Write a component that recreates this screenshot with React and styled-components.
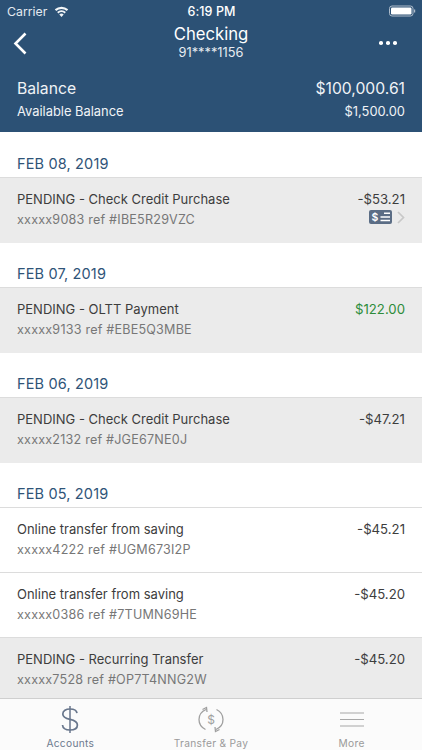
import React from "react";
import styled, { createGlobalStyle } from "styled-components";

const Global = createGlobalStyle`
  html, body { margin: 0; padding: 0; background: #fff; }
  body { font-family: Inter, "Liberation Sans", sans-serif; -webkit-font-smoothing: antialiased; }
`;
const Page = styled.div`
  width: 422px; height: 750px; overflow: hidden; display: flex; flex-direction: column; background: #fff;
`;
const Header = styled.header`
  background: #2c5175; color: #fff; height: 132px; flex: none; display: flex; flex-direction: column;
`;
const StatusBar = styled.div`
  height: 22px; display: grid; grid-template-columns: 1fr auto 1fr; align-items: center; padding: 0 6px 0 7px; font-size: 12.3px;
`;
const Carrier = styled.div`display: flex; align-items: center; gap: 7px; color: #e4eaf0;`;
const Clock = styled.div`font-weight: 500; font-size: 12.5px; letter-spacing: 0.1px;`;
const BatteryWrap = styled.div`display: flex; justify-content: flex-end;`;
const NavBar = styled.div`
  display: grid; grid-template-columns: 60px 1fr 60px; align-items: center; height: 44px; margin-top: -1px;
`;
const Back = styled.div`padding-left: 13px; display: flex;`;
const Title = styled.div`text-align: center; display: flex; flex-direction: column; align-items: center;`;
const TitleMain = styled.div`font-size: 16.7px; line-height: 20px; font-weight: 400; margin-top: -2px;`;
const TitleSub = styled.div`font-size: 12.8px; line-height: 14px; color: #e8edf2; margin-top: 2px;`;
const Dots = styled.div`display: flex; justify-content: flex-end; gap: 3.5px; padding-right: 25px;`;
const Dot = styled.span`width: 3.6px; height: 3.6px; border-radius: 50%; background: #fff;`;
const BalanceBlock = styled.div`padding: 0 17px; margin-top: 14px; display: flex; flex-direction: column; gap: 4px;`;
const BalanceRow = styled.div`
  display: flex; justify-content: space-between; align-items: center; color: #f0f3f6;
  font-size: ${(p) => (p.$big ? "15.7px" : "12.9px")}; line-height: ${(p) => (p.$big ? "20px" : "17px")};
`;
const Scroll = styled.main`flex: 1; min-height: 0; overflow: hidden; display: flex; flex-direction: column;`;
const DateHead = styled.div`
  height: 44px; flex: none; box-sizing: border-box; padding: 21px 17px 0; font-size: 14.5px; line-height: 20px;
  color: #2f5478; letter-spacing: 0.15px;
`;
const First = styled(DateHead)`height: 45px; padding-top: 22px;`;
const Row = styled.div`
  height: ${(p) => p.$h}px; box-sizing: border-box; flex: none; padding: 13px 17px 0; border-top: 1px solid #dcdcdc;
  background: ${(p) => (p.$pending ? "#ebebeb" : "#fff")}; display: flex; justify-content: space-between;
`;
const Left = styled.div`display: flex; flex-direction: column; gap: 5px;`;
const Name = styled.div`font-size: 13px; line-height: 16px; color: #3d3d3d;`;
const Ref = styled.div`font-size: 12.6px; line-height: 16px; color: #777; letter-spacing: 0.2px;`;
const Right = styled.div`display: flex; flex-direction: column; align-items: flex-end; gap: 3px;`;
const Amount = styled.div`font-size: 13.2px; line-height: 16px; color: ${(p) => (p.$pos ? "#2e8b3a" : "#3d3d3d")};`;
const RowIcons = styled.div`display: flex; align-items: center; gap: 5px;`;
const Tabs = styled.nav`
  height: 51px; flex: none; border-top: 1px solid #cfcfcf; background: #fbfbfb; display: grid; grid-template-columns: repeat(3, 1fr);
`;
const Tab = styled.div`display: flex; flex-direction: column; align-items: center; justify-content: flex-end;`;
const TabIcon = styled.div`height: 30px; display: flex; align-items: center; justify-content: center; margin-bottom: 3px;`;
const TabLabel = styled.div`font-size: 10.2px; line-height: 13px; letter-spacing: 0.3px; color: ${(p) => (p.$active ? "#6d7a8e" : "#9a9a9a")};`;

const Wifi = () => (
  <svg width="15" height="11" viewBox="0 0 15 11" fill="#f2f5f8">
    <path d="M7.5 11 5.3 8.4a3.3 3.3 0 0 1 4.4 0Z" />
    <path d="M4.4 7.4 3.1 5.9a6.7 6.7 0 0 1 8.8 0l-1.3 1.5a4.8 4.8 0 0 0-6.2 0Z" />
    <path d="M2.2 4.9.8 3.3a10.2 10.2 0 0 1 13.4 0l-1.4 1.6a8.1 8.1 0 0 0-10.6 0Z" />
  </svg>
);
const Battery = () => (
  <svg width="27" height="12" viewBox="0 0 27 12">
    <rect x="0.5" y="1" width="23.5" height="10" rx="2.5" fill="none" stroke="#aebccb" />
    <rect x="2" y="2.5" width="20.5" height="7" rx="1.2" fill="#fff" />
    <rect x="25" y="4.5" width="1.2" height="3" fill="#aebccb" />
  </svg>
);
const Chevron = () => (
  <svg width="14" height="23" viewBox="0 0 14 23" fill="none" stroke="#fff" strokeWidth="2.6">
    <path d="M12.5 1.5 2.5 11.5l10 10" />
  </svg>
);
const CheckIcon = () => (
  <svg width="23" height="14" viewBox="0 0 23 14">
    <rect width="23" height="14" rx="2" fill="#5b6d85" />
    <text x="6" y="11" fontSize="10.5" fontWeight="600" fill="#fff" textAnchor="middle" fontFamily="Inter, sans-serif">$</text>
    <path d="M15 3.2h6M11.5 7h9.5M11.5 10.6h9.5" stroke="#fff" strokeWidth="1.5" />
  </svg>
);
const RowChevron = () => (
  <svg width="8" height="13" viewBox="0 0 8 13" fill="none" stroke="#c8c8c8" strokeWidth="1.7">
    <path d="M1 1l5.5 5.5L1 12" />
  </svg>
);
const DollarIcon = () => (
  <svg width="18" height="27" viewBox="0 0 18 27" fill="none" stroke="#68768c" strokeWidth="1.7">
    <path d="M16 7.2C15.6 4.2 12.8 3 9 3 5 3 1.8 4.8 1.8 8c0 3.4 3.2 4.5 7.2 5.4 4.2.9 7.4 2.2 7.4 5.6 0 3.3-3.2 5-7.4 5-4 0-7.2-1.6-7.5-5" />
    <path d="M9 0v27" strokeWidth="1.5" />
  </svg>
);
const TransferIcon = () => (
  <svg width="26" height="27" viewBox="0 0 26 27" fill="none" stroke="#a0a0a0" strokeWidth="1.3">
    <path d="M8 3.5C3.8 5.3 1 9 1 13.5c0 4.2 2.5 8 6.5 10" />
    <path d="M18 23.5c4.2-1.8 7-5.5 7-10 0-4.2-2.5-8-6.5-10" />
    <path d="M4.5 3.5 8.5 1.5 9 6M21.5 23.5 17.5 25.5 17 21" />
    <text x="13" y="18" fontSize="12" fill="#a0a0a0" stroke="none" textAnchor="middle" fontFamily="Inter, sans-serif">$</text>
  </svg>
);
const MenuIcon = () => (
  <svg width="24" height="15" viewBox="0 0 24 15" stroke="#a8a8a8" strokeWidth="1.2">
    <path d="M0 1h24M0 7.5h24M0 14h24" />
  </svg>
);

const groups = [
  { date: "FEB 08, 2019", rows: [{ name: "PENDING - Check Credit Purchase", ref: "xxxxx9083 ref #IBE5R29VZC", amt: "-$53.21", pending: true, icons: true, h: 66 }] },
  { date: "FEB 07, 2019", rows: [{ name: "PENDING - OLTT Payment", ref: "xxxxx9133 ref #EBE5Q3MBE", amt: "$122.00", pending: true, pos: true, h: 66 }] },
  { date: "FEB 06, 2019", rows: [{ name: "PENDING - Check Credit Purchase", ref: "xxxxx2132 ref #JGE67NE0J", amt: "-$47.21", pending: true, h: 66 }] },
  { date: "FEB 05, 2019", rows: [
    { name: "Online transfer from saving", ref: "xxxxx4222 ref #UGM673I2P", amt: "-$45.21", h: 65 },
    { name: "Online transfer from saving", ref: "xxxxx0386 ref #7TUMN69HE", amt: "-$45.20", h: 65 },
    { name: "PENDING - Recurring Transfer", ref: "xxxxx7528 ref #OP7T4NNG2W", amt: "-$45.20", pending: true, h: 61 },
  ] },
];

export default function App() {
  return (
    <Page>
      <Global />
      <Header>
        <StatusBar>
          <Carrier>Carrier <Wifi /></Carrier>
          <Clock>6:19 PM</Clock>
          <BatteryWrap><Battery /></BatteryWrap>
        </StatusBar>
        <NavBar>
          <Back><Chevron /></Back>
          <Title>
            <TitleMain>Checking</TitleMain>
            <TitleSub>91****1156</TitleSub>
          </Title>
          <Dots><Dot /><Dot /><Dot /></Dots>
        </NavBar>
        <BalanceBlock>
          <BalanceRow $big><span>Balance</span><span>$100,000.61</span></BalanceRow>
          <BalanceRow><span>Available Balance</span><span>$1,500.00</span></BalanceRow>
        </BalanceBlock>
      </Header>
      <Scroll>
        {groups.map((g, i) => {
          const H = i === 0 ? First : DateHead;
          return (
            <React.Fragment key={g.date}>
              <H>{g.date}</H>
              {g.rows.map((r) => (
                <Row key={r.ref} $pending={r.pending} $h={r.h}>
                  <Left>
                    <Name>{r.name}</Name>
                    <Ref>{r.ref}</Ref>
                  </Left>
                  <Right>
                    <Amount $pos={r.pos}>{r.amt}</Amount>
                    {r.icons && <RowIcons><CheckIcon /><RowChevron /></RowIcons>}
                  </Right>
                </Row>
              ))}
            </React.Fragment>
          );
        })}
      </Scroll>
      <Tabs>
        <Tab><TabIcon><DollarIcon /></TabIcon><TabLabel $active>Accounts</TabLabel></Tab>
        <Tab><TabIcon><TransferIcon /></TabIcon><TabLabel>Transfer &amp; Pay</TabLabel></Tab>
        <Tab><TabIcon><MenuIcon /></TabIcon><TabLabel>More</TabLabel></Tab>
      </Tabs>
    </Page>
  );
}
